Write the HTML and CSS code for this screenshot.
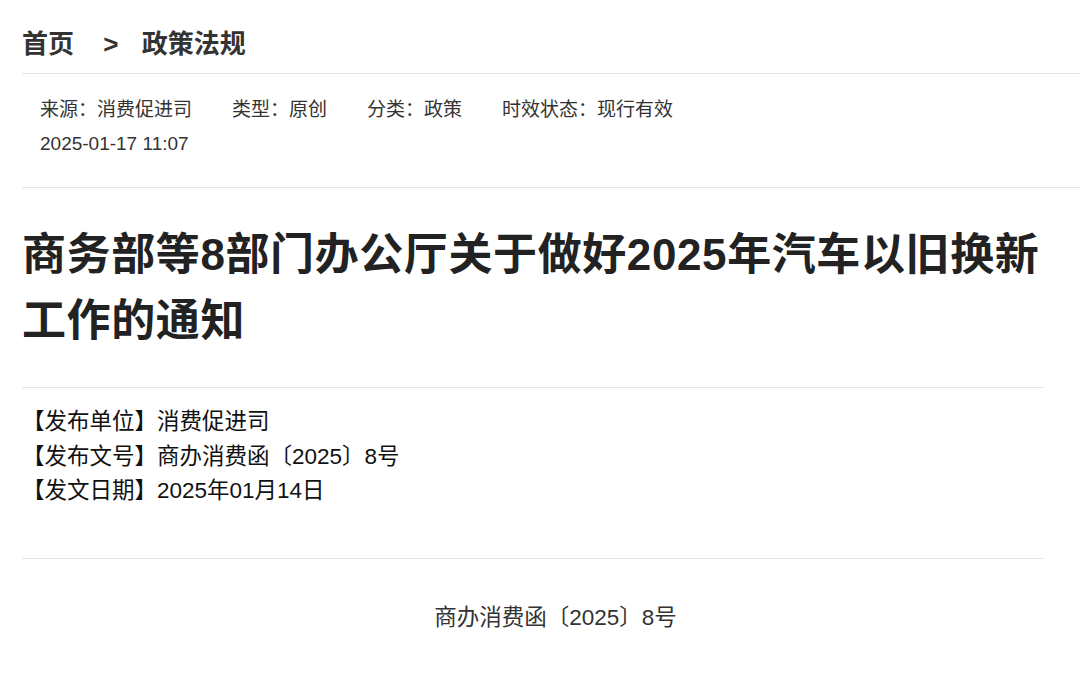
FILE: index.html
```html
<!DOCTYPE html>
<html lang="zh-CN">
<head>
    <meta charset="UTF-8">
    <meta name="viewport" content="width=device-width, initial-scale=1.0">
    <title>政策法规</title>
    <link rel="stylesheet" href="styles.css">
</head>
<body>
    <div class="page">
        <div class="breadcrumb">
            <a href="#">首页</a>
            <span class="sep">&gt;</span>
            <a href="#">政策法规</a>
        </div>

        <div class="meta">
            <div class="meta-row">
                <span>来源：消费促进司</span>
                <span>类型：原创</span>
                <span>分类：政策</span>
                <span>时效状态：现行有效</span>
            </div>
            <div class="meta-date">2025-01-17 11:07</div>
        </div>

        <div class="article">
            <h1 class="title">商务部等8部门办公厅关于做好2025年汽车以旧换新工作的通知</h1>

            <div class="info">
                <p>【发布单位】消费促进司</p>
                <p>【发布文号】商办消费函〔2025〕8号</p>
                <p>【发文日期】2025年01月14日</p>
            </div>

            <div class="content">
                <p class="doc-no">商办消费函〔2025〕8号</p>
            </div>
        </div>
    </div>
</body>
</html>
```

FILE: styles.css
```css
body {
    margin: 0;
    background-color: #fff;
    color: #333;
    font-family: "Liberation Sans", "Noto Sans CJK SC", sans-serif;
}

.page {
    padding-left: 22px;
}

.breadcrumb {
    padding: 26px 0 11px;
    line-height: 36px;
    font-size: 26px;
    font-weight: bold;
    border-bottom: 1px solid #e6e6e6;
}

.breadcrumb a {
    color: #333;
    text-decoration: none;
}

.breadcrumb .sep {
    margin: 0 16px 0 22px;
}

.meta {
    padding: 19px 0 26px 18px;
    font-size: 19px;
    line-height: 34px;
    color: #333;
    border-bottom: 1px solid #e6e6e6;
}

.meta-row {
    display: flex;
    gap: 40px;
}

.article {
    margin-right: 36px;
}

.title {
    margin: 0;
    padding: 34px 0 33px;
    font-size: 44px;
    line-height: 66px;
    font-weight: bold;
    letter-spacing: 0.6px;
    color: #222;
    border-bottom: 1px solid #e6e6e6;
}

.info {
    padding: 17px 0 49px;
    font-size: 22.5px;
    line-height: 34.5px;
    color: #111;
    border-bottom: 1px solid #e6e6e6;
}

.info p {
    margin: 0;
}

.content {
    padding-top: 42px;
}

.doc-no {
    margin: 0;
    font-size: 22.5px;
    line-height: 34px;
    text-align: center;
    text-indent: 2em;
    color: #333;
}
```
